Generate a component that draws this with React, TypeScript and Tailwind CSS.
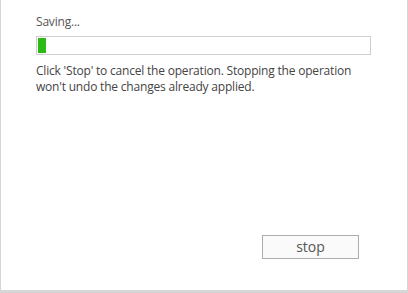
import React from "react";

export default function App() {
  return (
    <div
      className="w-[408px] h-[293px] bg-white border-l border-r border-b-[3px] border-[#d6d6d6] text-[#444444] flex flex-col"
      style={{ fontFamily: '"Open Sans", "Noto Sans", sans-serif' }}
    >
      <div className="pl-[35px] pr-[36px] pt-[14px] flex flex-col">
        <div className="text-[12px] leading-[16px] tracking-[-0.2px] text-[#555555]">Saving...</div>
        <div className="mt-[6px] w-[335px] h-[19px] border border-[#cfcfcf] p-[1px] bg-white">
          <div className="h-full w-[8px] bg-[#2bbb14]" />
        </div>
        <div className="mt-[8px] text-[12px] leading-[16px] tracking-[-0.2px] w-[335px]">
          Click 'Stop' to cancel the operation. Stopping the operation won't undo the changes already applied.
        </div>
      </div>
      <div className="flex-1" />
      <div className="flex justify-end pr-[48px] pb-[31px]">
        <button className="w-[97px] h-[24px] border border-[#adadad] bg-[#fafafa] text-[14px] text-[#555555] leading-none">
          stop
        </button>
      </div>
    </div>
  );
}
